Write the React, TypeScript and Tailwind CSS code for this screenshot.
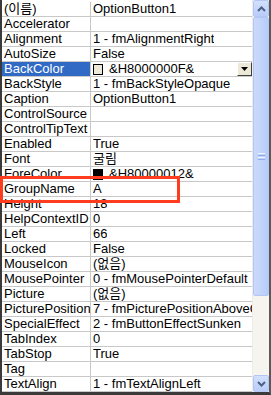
import React from "react";

type Row = {
  name: string;
  value: string;
  swatch?: "light" | "dark";
  selected?: boolean;
  dropdown?: boolean;
};

const rows: Row[] = [
  { name: "(이름)", value: "OptionButton1" },
  { name: "Accelerator", value: "" },
  { name: "Alignment", value: "1 - fmAlignmentRight" },
  { name: "AutoSize", value: "False" },
  { name: "BackColor", value: "&H8000000F&", swatch: "light", selected: true, dropdown: true },
  { name: "BackStyle", value: "1 - fmBackStyleOpaque" },
  { name: "Caption", value: "OptionButton1" },
  { name: "ControlSource", value: "" },
  { name: "ControlTipText", value: "" },
  { name: "Enabled", value: "True" },
  { name: "Font", value: "굴림" },
  { name: "ForeColor", value: "&H80000012&", swatch: "dark" },
  { name: "GroupName", value: "A" },
  { name: "Height", value: "18" },
  { name: "HelpContextID", value: "0" },
  { name: "Left", value: "66" },
  { name: "Locked", value: "False" },
  { name: "MouseIcon", value: "(없음)" },
  { name: "MousePointer", value: "0 - fmMousePointerDefault" },
  { name: "Picture", value: "(없음)" },
  { name: "PicturePosition", value: "7 - fmPicturePositionAboveCenter" },
  { name: "SpecialEffect", value: "2 - fmButtonEffectSunken" },
  { name: "TabIndex", value: "0" },
  { name: "TabStop", value: "True" },
  { name: "Tag", value: "" },
  { name: "TextAlign", value: "1 - fmTextAlignLeft" },
];

function ScrollButton({ dir }: { dir: "up" | "down" }) {
  return (
    <div className="h-[17px] w-full shrink-0 flex items-center justify-center rounded-[2px] border border-[#b3c6f4] bg-gradient-to-b from-[#d3e0fd] to-[#b8cdf9]">
      <svg width="9" height="6" viewBox="0 0 9 6">
        {dir === "up" ? (
          <polyline points="1,5 4.5,1.5 8,5" fill="none" stroke="#4d6185" strokeWidth="2" />
        ) : (
          <polyline points="1,1 4.5,4.5 8,1" fill="none" stroke="#4d6185" strokeWidth="2" />
        )}
      </svg>
    </div>
  );
}

export default function App() {
  return (
    <div
      className="relative w-[271px] h-[395px] bg-white overflow-hidden text-black"
      style={{ fontFamily: '"Liberation Sans", "Noto Sans CJK KR", sans-serif' }}
    >
      <div className="flex flex-col h-full border-l-[2px] border-r-[2px] border-b-[3px] border-l-[#3a3a3a] border-r-[#5a5a5a] border-b-[#3a3a3a]">
        <div className="flex flex-1 min-h-0">
          {/* property grid */}
          <div className="w-[250px] shrink-0 min-w-0 overflow-hidden pt-[2px] flex flex-col">
            {rows.map((r) => (
              <div key={r.name} className="flex h-[15px] shrink-0 border-b border-[#c8c8c8] text-[13px] leading-[14px]">
                <div
                  className={
                    "w-[89px] shrink-0 border-r border-[#c8c8c8] pl-[2px] whitespace-nowrap overflow-hidden " +
                    (r.selected ? "bg-[#316ac5] text-white" : "")
                  }
                >
                  {r.name}
                </div>
                <div className="flex-1 min-w-0 flex items-center pl-[2px] whitespace-nowrap overflow-hidden">
                  {r.swatch && (
                    <span
                      className={
                        "shrink-0 w-[10px] h-[11px] border border-black mr-[6px] " +
                        (r.swatch === "dark" ? "bg-black" : "bg-[#ece9d8]")
                      }
                    />
                  )}
                  <span className="leading-[14px] min-w-0 overflow-hidden">{r.value}</span>
                  {r.dropdown && (
                    <span className="ml-auto shrink-0 w-[15px] h-[14px] flex items-center justify-center bg-[#ece9d8] border-t border-l border-t-white border-l-white border-b border-r border-b-[#404040] border-r-[#404040]">
                      <svg width="7" height="4" viewBox="0 0 7 4">
                        <polygon points="0,0 7,0 3.5,4" fill="#000" />
                      </svg>
                    </span>
                  )}
                </div>
              </div>
            ))}
          </div>
          {/* scrollbar */}
          <div className="w-[17px] shrink-0 flex flex-col bg-[#f5f4ef] border-l border-[#eeede5]">
            <ScrollButton dir="up" />
            <div className="h-[279px] shrink-0 rounded-[2px] border border-[#b3c6f4] bg-gradient-to-r from-[#cad9fc] via-[#c3d4fb] to-[#b5cbf9] flex flex-col items-center justify-center gap-[1px]">
              <div className="w-[7px] h-[1px] bg-[#eef3fe]" />
              <div className="w-[7px] h-[1px] bg-[#8faaf0]" />
              <div className="w-[7px] h-[1px] bg-[#eef3fe]" />
              <div className="w-[7px] h-[1px] bg-[#8faaf0]" />
            </div>
            <div className="flex-1" />
            <ScrollButton dir="down" />
          </div>
        </div>
      </div>
      {/* highlight box */}
      <div className="absolute left-0 top-[176px] w-[180px] h-[27px] border-[3px] border-[#ff3c1e]" />
    </div>
  );
}
